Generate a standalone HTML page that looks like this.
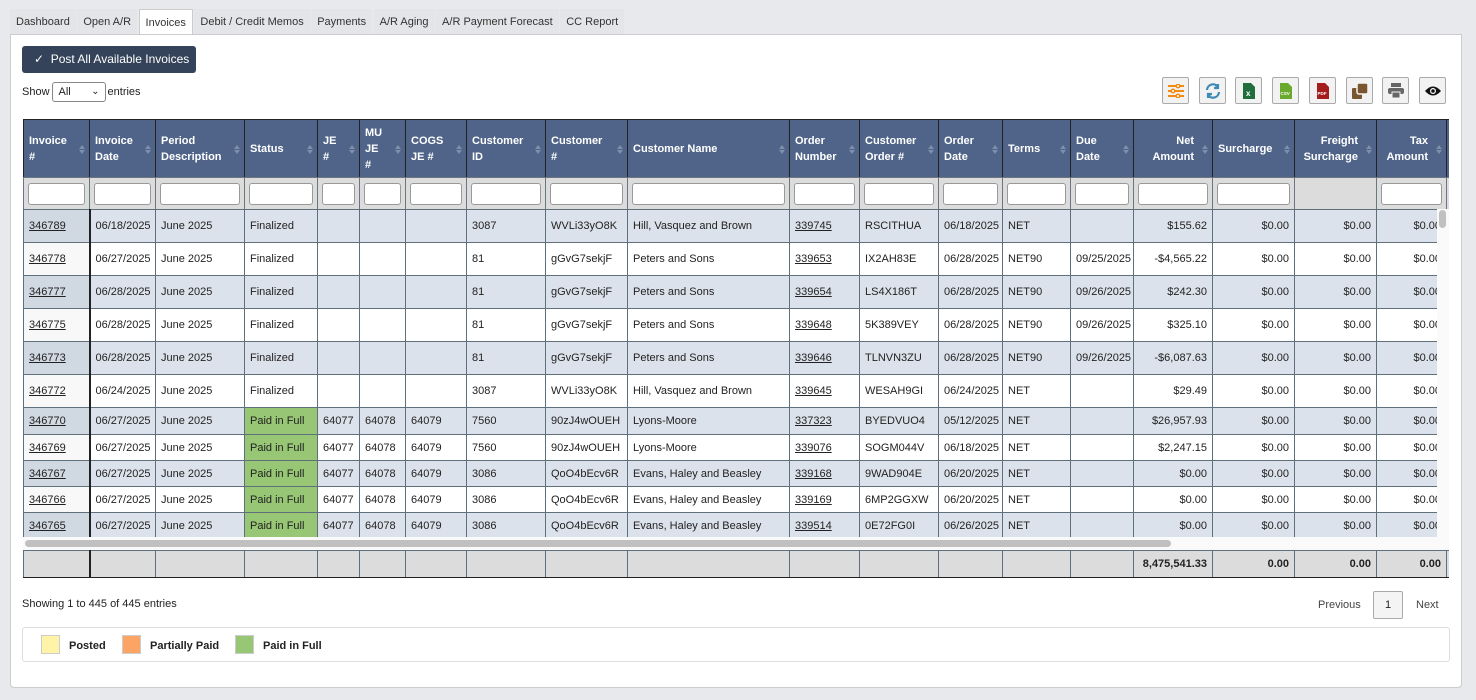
<!DOCTYPE html>
<html><head><meta charset="utf-8"><style>
*{box-sizing:border-box}
body{margin:0;width:1476px;height:700px;background:#e8e9ec;font-family:"Liberation Sans",Arial,sans-serif;font-size:11px;color:#222;overflow:hidden;position:relative}
.tabs{position:absolute;left:10px;top:9px;height:26px;display:flex}
.tab{padding:0 6px;height:26px;line-height:26px;font-size:11px;color:#333;background:#e4e5e8;margin-right:1.5px}
.tab.act{background:#fff;border:1px solid #ccc;border-bottom:none;height:27px}
.panel{position:absolute;left:10px;top:34px;width:1452px;height:654px;background:#fff;border:1px solid #ccc;border-radius:0 0 4px 4px}
.btn{position:absolute;left:22px;top:46px;width:174px;height:27px;background:#344359;border-radius:3px;color:#fff;font-size:12px;line-height:27px;padding-left:12px}
.show{position:absolute;left:22px;top:82px;font-size:11px;line-height:20px}
.sel{display:inline-block;width:54px;height:20px;border:1px solid #888;border-radius:3px;vertical-align:middle;margin:0 2px;padding-left:6px;line-height:18px;position:relative}
.icons{position:absolute;top:77px;left:1162px}
.ic{position:absolute;top:0;width:27px;height:27px;border:1px solid #aaa;background:#f2f2f2;border-radius:2px;display:flex;align-items:center;justify-content:center}
table{border-collapse:collapse;table-layout:fixed;position:absolute}
td,th{overflow:hidden;white-space:nowrap;padding:0 5px}
.hd th{background:#4f6488;color:#fff;font-weight:bold;text-align:left;font-size:11px;line-height:16px;border:1px solid #222;height:58px;position:relative}
.hd th.r{text-align:right;padding-right:18px}
.so{position:absolute;right:4px;top:22px;width:6px;height:14px}
.so:before{content:"";position:absolute;left:0;top:0;border:3px solid transparent;border-bottom:4px solid #7d8fab}
.so:after{content:"";position:absolute;left:0;top:8px;border:3px solid transparent;border-top:4px solid #7d8fab}
.fl td{background:#dcdcdc;height:32px;border:1px solid #6a7680;padding:0 4px}
.fl td div{height:22px;background:#fff;border:1px solid #999;border-radius:3px}
.bd td{border:1px solid #5f6f7c;line-height:14px}
.bd tr.a td{height:33px}
.bd tr.b td{height:26px}
.bd tr:nth-child(odd) td{background:#dce2eb}
.bd tr:nth-child(even) td{background:#fff}
.bd tr:nth-child(odd) td:first-child{background:#d0d8e2}
.bd tr:nth-child(even) td:first-child{background:#f8f8f8}
.bd td:first-child{border-right:2px solid #222}
.bd td.g{background:#97c675!important}
.bd td.r,.ft td.r{text-align:right}
u{text-decoration:underline}
.ft td{background:#dcdcdc;border:1px solid #5f6f7c;height:27px;font-weight:bold;border-bottom:2px solid #222}
.ft td:first-child{border-right:2px solid #222}
</style></head><body>
<div class="tabs"><div class="tab">Dashboard</div><div class="tab">Open A/R</div><div class="tab act">Invoices</div><div class="tab">Debit / Credit Memos</div><div class="tab">Payments</div><div class="tab">A/R Aging</div><div class="tab">A/R Payment Forecast</div><div class="tab">CC Report</div></div>
<div class="panel"></div>
<div class="btn">✓&nbsp; Post All Available Invoices</div>
<div class="show">Show<span class="sel">All<span style="position:absolute;right:5px;top:0;font-size:10px">&#8964;</span></span>entries</div>
<div class="icons">
<div class="ic" style="left:0"><svg width="16" height="14"><g stroke="#f38a12" stroke-width="2"><line x1="0" y1="2" x2="16" y2="2"/><line x1="0" y1="7" x2="16" y2="7"/><line x1="0" y1="12" x2="16" y2="12"/></g><g fill="#fff" stroke="#f38a12" stroke-width="1.5"><circle cx="10" cy="2" r="1.8"/><circle cx="5" cy="7" r="1.8"/><circle cx="10" cy="12" r="1.8"/></g></svg></div>
<div class="ic" style="left:37px"><svg width="16" height="16" fill="none" stroke="#3e8bb5" stroke-width="2.2"><path d="M2 7a6 6 0 0 1 11-3"/><path d="M14 9a6 6 0 0 1-11 3"/><path d="M13 1v4h-4" fill="#3e8bb5"/><path d="M3 15v-4h4" fill="#3e8bb5"/></svg></div>
<div class="ic" style="left:73px"><svg width="12" height="16"><path d="M0 0h8l4 4v12H0z" fill="#1f6e3c"/><text x="3" y="13" fill="#fff" font-size="8" font-family="Liberation Sans" font-weight="bold">x</text></svg></div>
<div class="ic" style="left:110px"><svg width="12" height="16"><path d="M0 0h8l4 4v12H0z" fill="#6aa82e"/><text x="0.5" y="12" fill="#fff" font-size="4.5" font-family="Liberation Sans" font-weight="bold">CSV</text></svg></div>
<div class="ic" style="left:147px"><svg width="12" height="16"><path d="M0 0h8l4 4v12H0z" fill="#a51d1d"/><text x="0.5" y="12" fill="#fff" font-size="4.5" font-family="Liberation Sans" font-weight="bold">PDF</text></svg></div>
<div class="ic" style="left:184px"><svg width="16" height="16"><rect x="0" y="5" width="10" height="11" rx="1" fill="#7a5630"/><rect x="5" y="0" width="11" height="11" rx="2" fill="#7a5630" stroke="#f2f2f2" stroke-width="1.5"/></svg></div>
<div class="ic" style="left:220px"><svg width="16" height="15"><rect x="3" y="0" width="10" height="4" fill="#666"/><rect x="0" y="5" width="16" height="6" rx="2" fill="#666"/><rect x="4" y="9" width="8" height="6" fill="#666" stroke="#f2f2f2"/></svg></div>
<div class="ic" style="left:257px"><svg width="18" height="12"><path d="M1 6Q9-3 17 6Q9 15 1 6z" fill="#111"/><circle cx="9" cy="6" r="3" fill="#fff"/><circle cx="9" cy="6" r="1.8" fill="#111"/></svg></div>
</div>

<div style="position:absolute;left:23px;top:119px;width:1426px;height:459px;overflow:hidden">
<table class="hd" style="left:0;top:0;width:1440px">
<colgroup><col style="width:66px"><col style="width:66px"><col style="width:89px"><col style="width:73px"><col style="width:42px"><col style="width:46px"><col style="width:61px"><col style="width:79px"><col style="width:82px"><col style="width:162px"><col style="width:70px"><col style="width:79px"><col style="width:64px"><col style="width:68px"><col style="width:63px"><col style="width:79px"><col style="width:82px"><col style="width:82px"><col style="width:70px"><col style="width:37px"></colgroup>
<tr><th>Invoice<br>#<span class="so"></span></th><th>Invoice<br>Date<span class="so"></span></th><th>Period<br>Description<span class="so"></span></th><th>Status<span class="so"></span></th><th>JE<br>#<span class="so"></span></th><th>MU<br>JE<br>#<span class="so"></span></th><th>COGS<br>JE #<span class="so"></span></th><th>Customer<br>ID<span class="so"></span></th><th>Customer<br>#<span class="so"></span></th><th>Customer Name<span class="so"></span></th><th>Order<br>Number<span class="so"></span></th><th>Customer<br>Order #<span class="so"></span></th><th>Order<br>Date<span class="so"></span></th><th>Terms<span class="so"></span></th><th>Due<br>Date<span class="so"></span></th><th class="r">Net<br>Amount<span class="so"></span></th><th>Surcharge<span class="so"></span></th><th class="r">Freight<br>Surcharge<span class="so"></span></th><th class="r">Tax<br>Amount<span class="so"></span></th><th></th></tr>
</table>
<table class="fl" style="left:0;top:58px;width:1440px">
<colgroup><col style="width:66px"><col style="width:66px"><col style="width:89px"><col style="width:73px"><col style="width:42px"><col style="width:46px"><col style="width:61px"><col style="width:79px"><col style="width:82px"><col style="width:162px"><col style="width:70px"><col style="width:79px"><col style="width:64px"><col style="width:68px"><col style="width:63px"><col style="width:79px"><col style="width:82px"><col style="width:82px"><col style="width:70px"><col style="width:37px"></colgroup>
<tr><td><div></div></td><td><div></div></td><td><div></div></td><td><div></div></td><td><div></div></td><td><div></div></td><td><div></div></td><td><div></div></td><td><div></div></td><td><div></div></td><td><div></div></td><td><div></div></td><td><div></div></td><td><div></div></td><td><div></div></td><td><div></div></td><td><div></div></td><td></td><td><div></div></td><td></td></tr>
</table>
<div style="position:absolute;left:0;top:90px;width:1414px;height:328px;overflow:hidden">
<table class="bd" style="left:0;top:0;width:1440px">
<colgroup><col style="width:66px"><col style="width:66px"><col style="width:89px"><col style="width:73px"><col style="width:42px"><col style="width:46px"><col style="width:61px"><col style="width:79px"><col style="width:82px"><col style="width:162px"><col style="width:70px"><col style="width:79px"><col style="width:64px"><col style="width:68px"><col style="width:63px"><col style="width:79px"><col style="width:82px"><col style="width:82px"><col style="width:70px"><col style="width:37px"></colgroup>
<tr class="a"><td><u>346789</u></td><td>06/18/2025</td><td>June 2025</td><td>Finalized</td><td></td><td></td><td></td><td>3087</td><td>WVLi33yO8K</td><td>Hill, Vasquez and Brown</td><td><u>339745</u></td><td>RSCITHUA</td><td>06/18/2025</td><td>NET</td><td></td><td class="r">$155.62</td><td class="r">$0.00</td><td class="r">$0.00</td><td class="r">$0.00</td><td></td></tr>
<tr class="a"><td><u>346778</u></td><td>06/27/2025</td><td>June 2025</td><td>Finalized</td><td></td><td></td><td></td><td>81</td><td>gGvG7sekjF</td><td>Peters and Sons</td><td><u>339653</u></td><td>IX2AH83E</td><td>06/28/2025</td><td>NET90</td><td>09/25/2025</td><td class="r">-$4,565.22</td><td class="r">$0.00</td><td class="r">$0.00</td><td class="r">$0.00</td><td></td></tr>
<tr class="a"><td><u>346777</u></td><td>06/28/2025</td><td>June 2025</td><td>Finalized</td><td></td><td></td><td></td><td>81</td><td>gGvG7sekjF</td><td>Peters and Sons</td><td><u>339654</u></td><td>LS4X186T</td><td>06/28/2025</td><td>NET90</td><td>09/26/2025</td><td class="r">$242.30</td><td class="r">$0.00</td><td class="r">$0.00</td><td class="r">$0.00</td><td></td></tr>
<tr class="a"><td><u>346775</u></td><td>06/28/2025</td><td>June 2025</td><td>Finalized</td><td></td><td></td><td></td><td>81</td><td>gGvG7sekjF</td><td>Peters and Sons</td><td><u>339648</u></td><td>5K389VEY</td><td>06/28/2025</td><td>NET90</td><td>09/26/2025</td><td class="r">$325.10</td><td class="r">$0.00</td><td class="r">$0.00</td><td class="r">$0.00</td><td></td></tr>
<tr class="a"><td><u>346773</u></td><td>06/28/2025</td><td>June 2025</td><td>Finalized</td><td></td><td></td><td></td><td>81</td><td>gGvG7sekjF</td><td>Peters and Sons</td><td><u>339646</u></td><td>TLNVN3ZU</td><td>06/28/2025</td><td>NET90</td><td>09/26/2025</td><td class="r">-$6,087.63</td><td class="r">$0.00</td><td class="r">$0.00</td><td class="r">$0.00</td><td></td></tr>
<tr class="a"><td><u>346772</u></td><td>06/24/2025</td><td>June 2025</td><td>Finalized</td><td></td><td></td><td></td><td>3087</td><td>WVLi33yO8K</td><td>Hill, Vasquez and Brown</td><td><u>339645</u></td><td>WESAH9GI</td><td>06/24/2025</td><td>NET</td><td></td><td class="r">$29.49</td><td class="r">$0.00</td><td class="r">$0.00</td><td class="r">$0.00</td><td></td></tr>
<tr class="b" style="height:27px"><td><u>346770</u></td><td>06/27/2025</td><td>June 2025</td><td class="g">Paid in Full</td><td>64077</td><td>64078</td><td>64079</td><td>7560</td><td>90zJ4wOUEH</td><td>Lyons-Moore</td><td><u>337323</u></td><td>BYEDVUO4</td><td>05/12/2025</td><td>NET</td><td></td><td class="r">$26,957.93</td><td class="r">$0.00</td><td class="r">$0.00</td><td class="r">$0.00</td><td></td></tr>
<tr class="b"><td><u>346769</u></td><td>06/27/2025</td><td>June 2025</td><td class="g">Paid in Full</td><td>64077</td><td>64078</td><td>64079</td><td>7560</td><td>90zJ4wOUEH</td><td>Lyons-Moore</td><td><u>339076</u></td><td>SOGM044V</td><td>06/18/2025</td><td>NET</td><td></td><td class="r">$2,247.15</td><td class="r">$0.00</td><td class="r">$0.00</td><td class="r">$0.00</td><td></td></tr>
<tr class="b"><td><u>346767</u></td><td>06/27/2025</td><td>June 2025</td><td class="g">Paid in Full</td><td>64077</td><td>64078</td><td>64079</td><td>3086</td><td>QoO4bEcv6R</td><td>Evans, Haley and Beasley</td><td><u>339168</u></td><td>9WAD904E</td><td>06/20/2025</td><td>NET</td><td></td><td class="r">$0.00</td><td class="r">$0.00</td><td class="r">$0.00</td><td class="r">$0.00</td><td></td></tr>
<tr class="b"><td><u>346766</u></td><td>06/27/2025</td><td>June 2025</td><td class="g">Paid in Full</td><td>64077</td><td>64078</td><td>64079</td><td>3086</td><td>QoO4bEcv6R</td><td>Evans, Haley and Beasley</td><td><u>339169</u></td><td>6MP2GGXW</td><td>06/20/2025</td><td>NET</td><td></td><td class="r">$0.00</td><td class="r">$0.00</td><td class="r">$0.00</td><td class="r">$0.00</td><td></td></tr>
<tr class="b"><td><u>346765</u></td><td>06/27/2025</td><td>June 2025</td><td class="g">Paid in Full</td><td>64077</td><td>64078</td><td>64079</td><td>3086</td><td>QoO4bEcv6R</td><td>Evans, Haley and Beasley</td><td><u>339514</u></td><td>0E72FG0I</td><td>06/26/2025</td><td>NET</td><td></td><td class="r">$0.00</td><td class="r">$0.00</td><td class="r">$0.00</td><td class="r">$0.00</td><td></td></tr>
</table>
</div>
<div style="position:absolute;left:1414px;top:90px;width:12px;height:328px;background:#fafafa"><div style="position:absolute;left:2px;top:1px;width:7px;height:18px;background:#c0c0c0;border-radius:4px"></div></div>
<div style="position:absolute;left:0;top:418px;width:1426px;height:13px;background:#fafafa"><div style="position:absolute;left:2px;top:3px;width:1146px;height:7px;background:#c0c0c0;border-radius:4px"></div></div>
<table class="ft" style="left:0;top:431px;width:1440px">
<colgroup><col style="width:66px"><col style="width:66px"><col style="width:89px"><col style="width:73px"><col style="width:42px"><col style="width:46px"><col style="width:61px"><col style="width:79px"><col style="width:82px"><col style="width:162px"><col style="width:70px"><col style="width:79px"><col style="width:64px"><col style="width:68px"><col style="width:63px"><col style="width:79px"><col style="width:82px"><col style="width:82px"><col style="width:70px"><col style="width:37px"></colgroup>
<tr><td></td><td></td><td></td><td></td><td></td><td></td><td></td><td></td><td></td><td></td><td></td><td></td><td></td><td></td><td></td><td class="r">8,475,541.33</td><td class="r">0.00</td><td class="r">0.00</td><td class="r">0.00</td><td></td></tr>
</table>
</div>

<div style="position:absolute;left:22px;top:598px;font-size:11px">Showing 1 to 445 of 445 entries</div>
<div style="position:absolute;left:1318px;top:599px;font-size:11px;color:#444">Previous</div>
<div style="position:absolute;left:1373px;top:591px;width:30px;height:28px;border:1px solid #aaa;border-radius:2px;background:#f4f4f4;text-align:center;line-height:27px;font-size:11px">1</div>
<div style="position:absolute;left:1416px;top:599px;font-size:11px;color:#444">Next</div>
<div style="position:absolute;left:22px;top:627px;width:1428px;height:35px;border:1px solid #ddd;border-radius:3px">
<div style="position:absolute;left:18px;top:7px;width:19px;height:19px;background:#fff3a8;border:1px solid #ccc"></div>
<div style="position:absolute;left:46px;top:12px;font-weight:bold;font-size:11px">Posted</div>
<div style="position:absolute;left:99px;top:7px;width:19px;height:19px;background:#fba464;border:1px solid #ccc"></div>
<div style="position:absolute;left:127px;top:12px;font-weight:bold;font-size:11px">Partially Paid</div>
<div style="position:absolute;left:212px;top:7px;width:19px;height:19px;background:#97c675;border:1px solid #ccc"></div>
<div style="position:absolute;left:240px;top:12px;font-weight:bold;font-size:11px">Paid in Full</div>
</div>
</body></html>
